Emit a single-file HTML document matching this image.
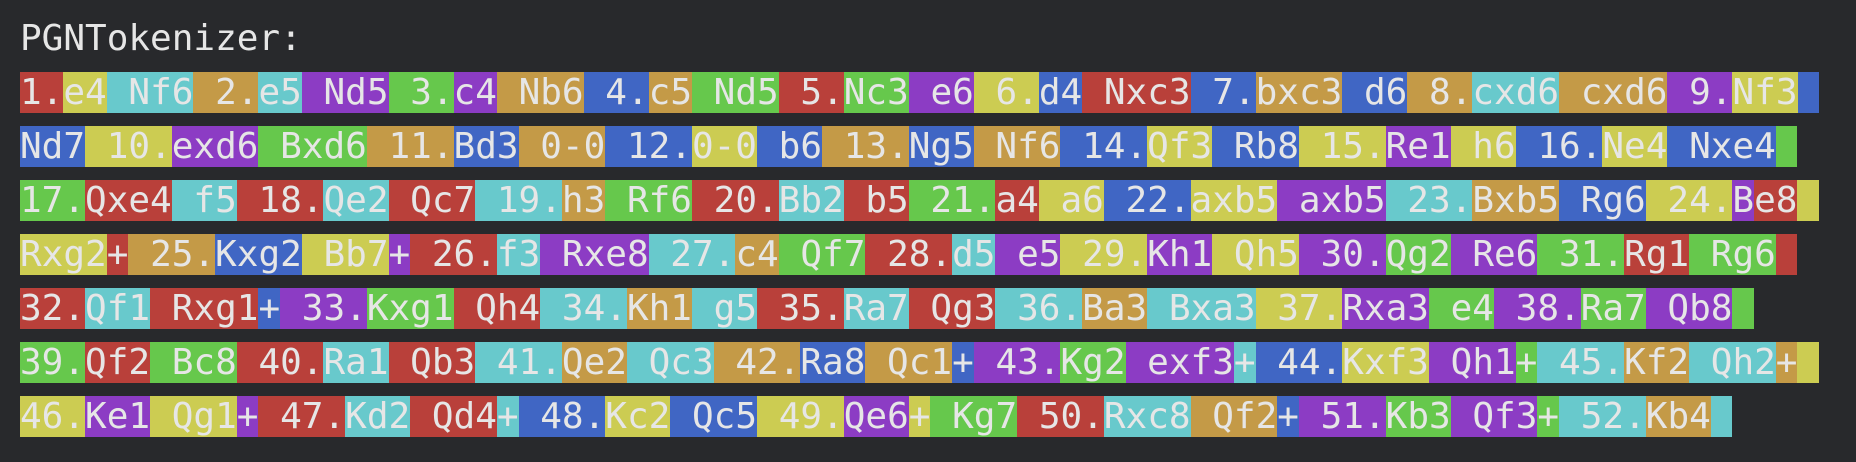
<!DOCTYPE html>
<html><head><meta charset="utf-8"><style>
html,body{margin:0;padding:0;background:#28292c;width:1856px;height:462px;overflow:hidden}
.w{padding:12px 0 0 20px;font-family:"DejaVu Sans Mono","Liberation Mono",monospace;font-size:36px;color:#e6e6e6}
.l{line-height:54px;white-space:pre;height:54px}
.R{background:#b9403a}.Y{background:#cccc52}.C{background:#68c9cc}.O{background:#c49a47}
.P{background:#8c3cc4}.G{background:#66c84c}.B{background:#4066c4}
</style></head><body><div class="w" id="w">
<div class="l">PGNTokenizer:</div>
<div class="l"><span class="R">1.</span><span class="Y">e4</span><span class="C"> Nf6</span><span class="O"> 2.</span><span class="C">e5</span><span class="P"> Nd5</span><span class="G"> 3.</span><span class="P">c4</span><span class="O"> Nb6</span><span class="B"> 4.</span><span class="O">c5</span><span class="G"> Nd5</span><span class="R"> 5.</span><span class="G">Nc3</span><span class="P"> e6</span><span class="Y"> 6.</span><span class="B">d4</span><span class="R"> Nxc3</span><span class="B"> 7.</span><span class="O">bxc3</span><span class="B"> d6</span><span class="O"> 8.</span><span class="C">cxd6</span><span class="O"> cxd6</span><span class="P"> 9.</span><span class="Y">Nf3</span><span class="B"> </span></div>
<div class="l"><span class="B">Nd7</span><span class="Y"> 10.</span><span class="P">exd6</span><span class="G"> Bxd6</span><span class="O"> 11.</span><span class="B">Bd3</span><span class="O"> 0-0</span><span class="B"> 12.</span><span class="Y">0-0</span><span class="B"> b6</span><span class="O"> 13.</span><span class="B">Ng5</span><span class="O"> Nf6</span><span class="B"> 14.</span><span class="Y">Qf3</span><span class="B"> Rb8</span><span class="Y"> 15.</span><span class="P">Re1</span><span class="Y"> h6</span><span class="B"> 16.</span><span class="Y">Ne4</span><span class="B"> Nxe4</span><span class="G"> </span></div>
<div class="l"><span class="G">17.</span><span class="R">Qxe4</span><span class="C"> f5</span><span class="R"> 18.</span><span class="C">Qe2</span><span class="R"> Qc7</span><span class="C"> 19.</span><span class="O">h3</span><span class="G"> Rf6</span><span class="R"> 20.</span><span class="C">Bb2</span><span class="R"> b5</span><span class="G"> 21.</span><span class="R">a4</span><span class="Y"> a6</span><span class="B"> 22.</span><span class="Y">axb5</span><span class="P"> axb5</span><span class="C"> 23.</span><span class="O">Bxb5</span><span class="B"> Rg6</span><span class="Y"> 24.</span><span class="P">B</span><span class="R">e8</span><span class="Y"> </span></div>
<div class="l"><span class="Y">Rxg2</span><span class="R">+</span><span class="O"> 25.</span><span class="B">Kxg2</span><span class="Y"> Bb7</span><span class="P">+</span><span class="R"> 26.</span><span class="C">f3</span><span class="P"> Rxe8</span><span class="C"> 27.</span><span class="O">c4</span><span class="G"> Qf7</span><span class="R"> 28.</span><span class="C">d5</span><span class="P"> e5</span><span class="Y"> 29.</span><span class="P">Kh1</span><span class="Y"> Qh5</span><span class="P"> 30.</span><span class="G">Qg2</span><span class="P"> Re6</span><span class="G"> 31.</span><span class="R">Rg1</span><span class="G"> Rg6</span><span class="R"> </span></div>
<div class="l"><span class="R">32.</span><span class="C">Qf1</span><span class="R"> Rxg1</span><span class="B">+</span><span class="P"> 33.</span><span class="G">Kxg1</span><span class="R"> Qh4</span><span class="C"> 34.</span><span class="O">Kh1</span><span class="C"> g5</span><span class="R"> 35.</span><span class="C">Ra7</span><span class="R"> Qg3</span><span class="C"> 36.</span><span class="O">Ba3</span><span class="C"> Bxa3</span><span class="Y"> 37.</span><span class="P">Rxa3</span><span class="G"> e4</span><span class="P"> 38.</span><span class="G">Ra7</span><span class="P"> Qb8</span><span class="G"> </span></div>
<div class="l"><span class="G">39.</span><span class="R">Qf2</span><span class="G"> Bc8</span><span class="R"> 40.</span><span class="C">Ra1</span><span class="R"> Qb3</span><span class="C"> 41.</span><span class="O">Qe2</span><span class="C"> Qc3</span><span class="O"> 42.</span><span class="B">Ra8</span><span class="O"> Qc1</span><span class="B">+</span><span class="P"> 43.</span><span class="G">Kg2</span><span class="P"> exf3</span><span class="C">+</span><span class="B"> 44.</span><span class="Y">Kxf3</span><span class="P"> Qh1</span><span class="G">+</span><span class="C"> 45.</span><span class="O">Kf2</span><span class="C"> Qh2</span><span class="O">+</span><span class="Y"> </span></div>
<div class="l"><span class="Y">46.</span><span class="P">Ke1</span><span class="Y"> Qg1</span><span class="P">+</span><span class="R"> 47.</span><span class="C">Kd2</span><span class="R"> Qd4</span><span class="C">+</span><span class="B"> 48.</span><span class="Y">Kc2</span><span class="B"> Qc5</span><span class="Y"> 49.</span><span class="P">Qe6</span><span class="Y">+</span><span class="G"> Kg7</span><span class="R"> 50.</span><span class="C">Rxc8</span><span class="O"> Qf2</span><span class="B">+</span><span class="P"> 51.</span><span class="G">Kb3</span><span class="P"> Qf3</span><span class="G">+</span><span class="C"> 52.</span><span class="O">Kb4</span><span class="C"> </span></div>
</div></body></html>
